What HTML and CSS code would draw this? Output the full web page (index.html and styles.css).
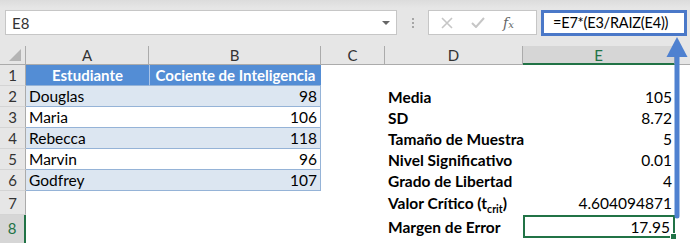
FILE: index.html
```html
<!DOCTYPE html>
<html lang="es">
<head>
    <meta charset="UTF-8">
    <title>Margen de Error</title>
    <link rel="stylesheet" href="styles.css">
</head>
<body>
    <div class="bar">
        <div class="namebox">
            <span>E8</span>
            <span class="caret"></span>
        </div>
        <div class="grip">
            <i></i><i></i><i></i>
        </div>
        <div class="fxbox">
            <svg width="12" height="12" viewBox="0 0 12 12"><path d="M1 1 L11 11 M11 1 L1 11" stroke="#c6c6c6" stroke-width="1.6" fill="none"/></svg>
            <svg width="14" height="11" viewBox="0 0 14 11"><path d="M1 6 L5 10 L13 1" stroke="#c6c6c6" stroke-width="2" fill="none"/></svg>
            <span class="fx">f<small>x</small></span>
        </div>
        <div class="formula">=E7*(E3/RAIZ(E4))</div>
    </div>

    <div class="sheet">
        <div class="corner"><span></span></div>
        <div class="colhead">A</div>
        <div class="colhead">B</div>
        <div class="colhead">C</div>
        <div class="colhead">D</div>
        <div class="colhead active">E</div>
        <div class="colhead last"></div>

        <div class="rowhead">1</div>
        <div class="cell th">Estudiante</div>
        <div class="cell th sep">Cociente de Inteligencia</div>
        <div class="cell"></div><div class="cell"></div><div class="cell"></div><div class="cell"></div>

        <div class="rowhead">2</div>
        <div class="cell tb band">Douglas</div>
        <div class="cell tb band num edge">98</div>
        <div class="cell"></div>
        <div class="cell label">Media</div>
        <div class="cell num">105</div>
        <div class="cell"></div>

        <div class="rowhead">3</div>
        <div class="cell tb">Maria</div>
        <div class="cell tb num edge">106</div>
        <div class="cell"></div>
        <div class="cell label">SD</div>
        <div class="cell num">8.72</div>
        <div class="cell"></div>

        <div class="rowhead">4</div>
        <div class="cell tb band">Rebecca</div>
        <div class="cell tb band num edge">118</div>
        <div class="cell"></div>
        <div class="cell label">Tamaño de Muestra</div>
        <div class="cell num">5</div>
        <div class="cell"></div>

        <div class="rowhead">5</div>
        <div class="cell tb">Marvin</div>
        <div class="cell tb num edge">96</div>
        <div class="cell"></div>
        <div class="cell label">Nivel Significativo</div>
        <div class="cell num">0.01</div>
        <div class="cell"></div>

        <div class="rowhead">6</div>
        <div class="cell tb band">Godfrey</div>
        <div class="cell tb band num edge">107</div>
        <div class="cell"></div>
        <div class="cell label">Grado de Libertad</div>
        <div class="cell num">4</div>
        <div class="cell"></div>

        <div class="rowhead">7</div>
        <div class="cell"></div>
        <div class="cell"></div>
        <div class="cell"></div>
        <div class="cell label"><span>Valor Crítico (t<sub>crit</sub>)</span></div>
        <div class="cell num">4.604094871</div>
        <div class="cell"></div>

        <div class="rowhead active">8</div>
        <div class="cell"></div>
        <div class="cell"></div>
        <div class="cell"></div>
        <div class="cell label top">Margen de Error</div>
        <div class="cell num selected">17.95<span class="handle"></span></div>
        <div class="cell"></div>
    </div>

    <!-- flecha que apunta a la barra de fórmulas -->
    <svg class="arrow" width="24" height="185" viewBox="0 0 24 185">
        <path d="M12 20 L12 179" stroke="#4f81d0" stroke-width="5" stroke-linecap="round" fill="none"/>
        <path d="M12 0 L22.5 20 L1.5 20 Z" fill="#4f81d0"/>
    </svg>
</body>
</html>
```

FILE: styles.css
```css
body {
    margin: 0;
    width: 690px;
    height: 243px;
    overflow: hidden;
    position: relative;
    background: #fff;
    font-family: Lato, "Liberation Sans", sans-serif;
    font-size: 15.5px;
    color: #000;
}

.bar {
    height: 46px;
    box-sizing: border-box;
    padding: 10px 3px 0 5px;
    background: linear-gradient(#dcdcdc, #e6e6e6 8px);
    display: flex;
    align-items: flex-start;
}

.namebox {
    width: 392px;
    height: 25px;
    box-sizing: border-box;
    background: #fff;
    border: 1px solid #c6c6c6;
    display: flex;
    align-items: center;
    justify-content: space-between;
    padding: 0 6px;
    color: #333;
    font-size: 15px;
}

.caret {
    width: 0;
    height: 0;
    border-left: 4px solid transparent;
    border-right: 4px solid transparent;
    border-top: 4px solid #666;
}

.grip {
    width: 31px;
    height: 25px;
    display: flex;
    flex-direction: column;
    align-items: center;
    justify-content: center;
    gap: 2px;
}

.grip i {
    width: 2px;
    height: 2px;
    background: #a6a6a6;
}

.fxbox {
    width: 109px;
    height: 25px;
    box-sizing: border-box;
    background: #fff;
    border: 1px solid #c6c6c6;
    display: flex;
    align-items: center;
    gap: 18px;
    padding-left: 12px;
}

.fx {
    font-family: "DejaVu Serif", serif;
    font-style: italic;
    color: #666;
    font-size: 14px;
}

.fx small {
    font-size: 10px;
}

.formula {
    margin-left: 4px;
    width: 146px;
    height: 26px;
    box-sizing: border-box;
    border: 3px solid #4a78c8;
    background: #fff;
    padding-left: 9px;
    line-height: 20px;
    font-size: 14.5px;
    letter-spacing: -0.2px;
    color: #000;
}

.sheet {
    display: grid;
    grid-template-columns: 26px 123px 172px 64px 138px 152px 15px;
    grid-template-rows: 19px 21px 21px 21px 21px 21px 21px 24px 28px;
}

.corner,
.colhead,
.rowhead {
    background: #e6e6e6;
    color: #333;
    box-sizing: border-box;
    font-size: 15px;
}

.corner {
    border-bottom: 1px solid #ababab;
    border-right: 1px solid #ababab;
    position: relative;
}

.corner span {
    position: absolute;
    right: 4px;
    bottom: 3px;
    border-left: 12px solid transparent;
    border-bottom: 12px solid #b4b4b4;
}

.colhead {
    border-bottom: 1px solid #ababab;
    border-right: 1px solid #ababab;
    text-align: center;
    line-height: 19px;
}

.colhead.active {
    background: #d6d6d6;
    color: #217346;
    border-bottom: 2px solid #217346;
}

.colhead.last {
    border-right: none;
}

.rowhead {
    border-right: 1px solid #ababab;
    border-bottom: 1px solid #d4d4d4;
    display: flex;
    align-items: center;
    justify-content: center;
}

.rowhead.active {
    background: #d6d6d6;
    color: #217346;
    border-right: 2px solid #217346;
    border-bottom: none;
    padding-bottom: 3px;
}

.cell {
    box-sizing: border-box;
    padding: 0 3px;
    display: flex;
    align-items: center;
    white-space: nowrap;
}

.num {
    justify-content: flex-end;
}

.th {
    background: #538dd5;
    color: #fff;
    font-weight: bold;
    font-size: 15px;
    justify-content: center;
    border-bottom: 1px solid #95b3d7;
}

.th.sep {
    border-left: 1px solid #a9c4e8;
}

.tb {
    border-bottom: 1px solid #95b3d7;
}

.band {
    background: #dce6f1;
}

.edge {
    border-right: 1px solid #95b3d7;
}

.label {
    font-weight: bold;
}

.label sub {
    font-size: 10.5px;
    vertical-align: -4px;
    line-height: 0;
}

.top {
    height: 23px;
}

.selected {
    height: 23px;
    border: 2px solid #217346;
    position: relative;
}

.handle {
    position: absolute;
    right: -4px;
    bottom: -4px;
    width: 5px;
    height: 5px;
    background: #217346;
    border: 1px solid #fff;
}

.arrow {
    position: absolute;
    left: 665px;
    top: 37px;
}
```
